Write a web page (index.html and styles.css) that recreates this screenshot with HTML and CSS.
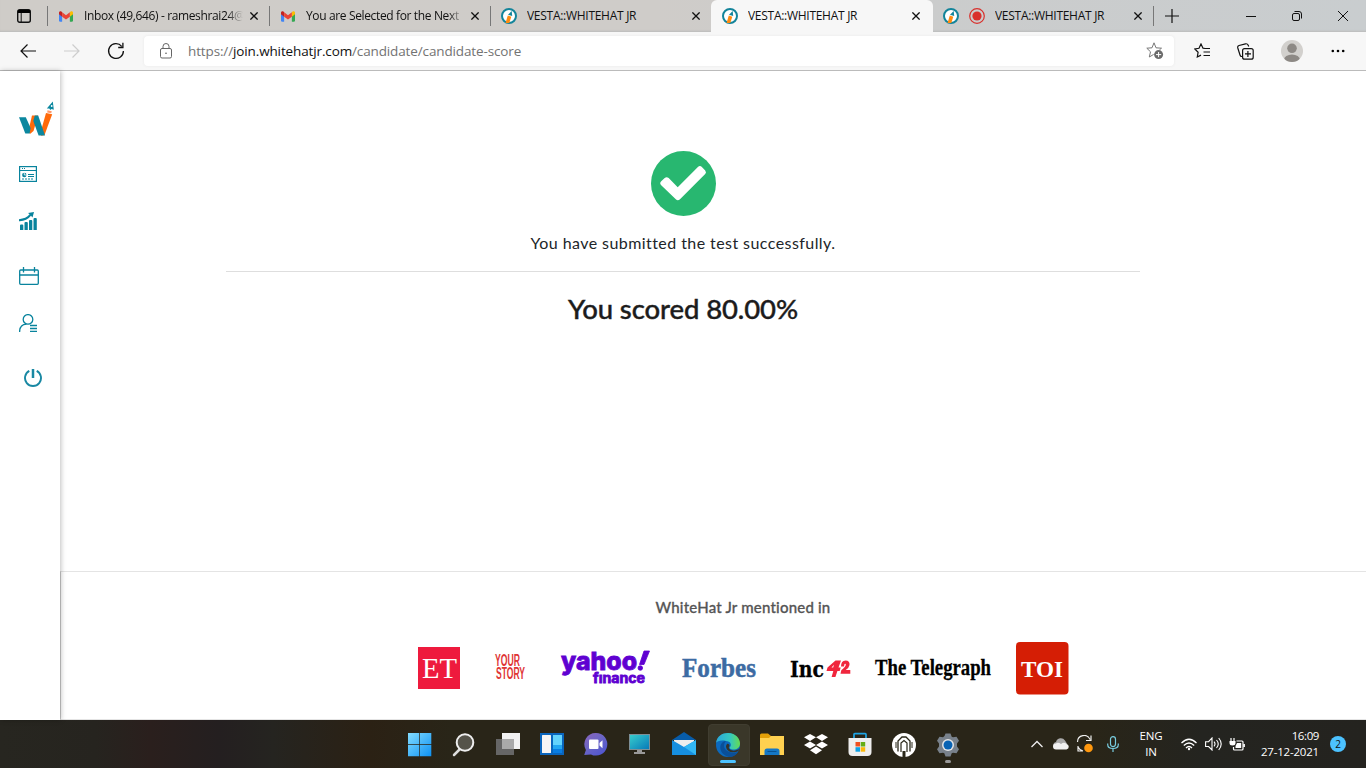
FILE: index.html
```html
<!DOCTYPE html>
<html lang="en">
<head>
<meta charset="utf-8">
<title>VESTA::WHITEHAT JR</title>
<link rel="stylesheet" href="styles.css">
</head>
<body>
<svg class="defs" width="0" height="0">
  <defs>
    <symbol id="gmail" viewBox="0 0 16 12">
      <path d="M0 2v8.500Q0 12 1.500 12H3.600V5z" fill="#4285f4"/>
      <path d="M16 2v8.500Q16 12 14.500 12h-2.100V5z" fill="#34a853"/>
      <path d="M12.400 1.200v5L16 3.500V1.700C16 0 14.200-.5 13 .5z" fill="#fbbc04"/>
      <path d="M3.600 1.200v5L0 3.500V1.700C0 0 1.800-.5 3 .5z" fill="#c5221f"/>
      <path d="M3.600 6.200v-5L8 4.500l4.400-3.300v5L8 9.500z" fill="#ea4335"/>
    </symbol>
    <symbol id="vesta" viewBox="0 0 16 16">
      <circle cx="8" cy="8" r="7" fill="#fff" stroke="#13849a" stroke-width="2"/>
      <path d="M6.800 7.500l3.500 1.200-2 6.300L4.500 15z" fill="#ff8a10"/>
      <path d="M10.700 3l.5 5-4.200-1.300z" fill="#13849a"/>
    </symbol>
    <symbol id="close" viewBox="0 0 8 8"><path d="M.4.400l7.200 7.200M7.600.400L.4 7.600" stroke="#111" stroke-width="1.300"/></symbol>
  </defs>
</svg>

<header class="tabs">
  <div class="tab-menu"><svg width="14" height="14" viewBox="0 0 14 14"><rect x=".7" y=".7" width="12.600" height="12.600" rx="2" fill="none" stroke="#111" stroke-width="1.400"/><path d="M1 1h12v3H1z"/><path d="M4.200 4v9" stroke="#111"/></svg></div>
  <div class="tab"><svg class="fav mail"><use href="#gmail"/></svg><span class="tab-title fade">Inbox (49,646) - rameshrai24@</span><svg class="x"><use href="#close"/></svg></div>
  <div class="tab"><svg class="fav mail"><use href="#gmail"/></svg><span class="tab-title fade">You are Selected for the Next</span><svg class="x"><use href="#close"/></svg></div>
  <div class="tab"><svg class="fav"><use href="#vesta"/></svg><span class="tab-title caps">VESTA::WHITEHAT JR</span><svg class="x"><use href="#close"/></svg></div>
  <div class="tab active"><svg class="fav"><use href="#vesta"/></svg><span class="tab-title caps">VESTA::WHITEHAT JR</span><svg class="x"><use href="#close"/></svg></div>
  <div class="tab last"><svg class="fav"><use href="#vesta"/></svg><svg class="rec" viewBox="0 0 16 16"><circle cx="8" cy="8" r="7.300" fill="none" stroke="#d9302c" stroke-width="1.200"/><circle cx="8" cy="8" r="4.600" fill="#d9302c"/></svg><span class="tab-title caps">VESTA::WHITEHAT JR</span><svg class="x"><use href="#close"/></svg></div>
  <svg class="plus" width="14" height="14" viewBox="0 0 14 14"><path d="M7 0v14M0 7h14" stroke="#111" stroke-width="1.200"/></svg>
  <div class="window-controls">
    <svg width="10" height="10"><path d="M0 5.500h10" stroke="#111"/></svg>
    <svg width="10" height="10" viewBox="0 0 10 10" fill="none" stroke="#111"><rect x=".5" y="2.500" width="7" height="7" rx="1.500"/><path d="M2.500.500H7Q9.500.500 9.500 3v4.500"/></svg>
    <svg width="10" height="10"><path d="M0 0l10 10M10 0L0 10" stroke="#111"/></svg>
  </div>
</header>

<div class="toolbar">
  <svg class="back" width="16" height="14" viewBox="0 0 16 14" fill="none" stroke="#111" stroke-width="1.200"><path d="M7.500.500L1 7l6.500 6.500M1 7h15"/></svg>
  <svg class="forward" width="16" height="14" viewBox="0 0 16 14" fill="none" stroke="#cdcdcd" stroke-width="1.200"><path d="M8.500.500L15 7l-6.500 6.500M15 7H0"/></svg>
  <svg class="reload" width="18" height="18" viewBox="0 0 18 18" fill="none" stroke="#111" stroke-width="1.300"><path d="M16.400 9A7.400 7.400 0 1 1 14.700 4.300M15.900.800V5.500h-4.700"/></svg>
  <div class="address">
    <svg width="12" height="16" viewBox="0 0 12 16" fill="none" stroke="#666"><rect x=".5" y="5.500" width="11" height="9.500" rx="1.500"/><path d="M3 5.500V3.500a3 3 0 0 1 6 0v2"/><circle cx="6" cy="10.200" r=".8" fill="#555" stroke="none"/></svg>
    <span class="url">https://<b>join.whitehatjr.com</b>/candidate/candidate-score</span>
    <svg class="star" width="18" height="18" viewBox="0 0 18 18"><path d="M8 .8l2 5 5.500.400-4.200 3.600 1.200 5L8 12.200 3.300 15l1.200-5.200L.8 6.200l5.200-.4z" fill="none" stroke="#777"/><circle cx="12.600" cy="12.600" r="5" fill="#fff"/><circle cx="12.600" cy="12.600" r="4.500" fill="#6b6b6b"/><path d="M12.600 10v5.200M10 12.600h5.200" stroke="#fff"/></svg>
  </div>
  <svg class="favorites" width="17" height="17" viewBox="0 0 17 17" fill="none" stroke="#111" stroke-width="1.200"><path d="M11 5.500L9 5.200 7 1 5 5.300.8 6l3.300 3.300L3.300 14 7 12.100M10.500 5.500H16M9.500 9H16M9.500 12.500H16"/></svg>
  <svg class="collections" width="17" height="17" viewBox="0 0 17 17" fill="none" stroke="#111" stroke-width="1.200"><rect x="5.600" y="5.600" width="10.600" height="10.600" rx="2"/><path d="M10.900 8v6M8 10.900h6M5 13.500H4.500Q3.500 13.500 3 12L.8 5Q.3 3 2 2.500L8.500.800Q10.500.500 11.200 2.200L11.700 3.500"/></svg>
  <svg class="avatar" width="22" height="22" viewBox="0 0 22 22"><defs><clipPath id="face"><circle cx="11" cy="11" r="11"/></clipPath></defs><g clip-path="url(#face)"><path d="M0 0h22v22H0z" fill="#d2d0cd"/><circle cx="11" cy="8.300" r="4.800" fill="#8d8985"/><ellipse cx="11" cy="20" rx="8" ry="5.500" fill="#8d8985"/></g></svg>
  <svg class="more" width="14" height="4"><circle cx="1.800" cy="2" r="1.300"/><circle cx="7" cy="2" r="1.300"/><circle cx="12.200" cy="2" r="1.300"/></svg>
</div>

<div class="page">
  <nav class="sidebar">
    <svg class="brand" width="36" height="35" viewBox="0 0 36 35"><path d="M9 31.500L13 14.500h6L14.500 30l-3.200 2.800z" fill="#ff6a0b"/><path d="M0 16.300h6.800L11.600 27l-1 5.600H6.300z" fill="#0b879f"/><path d="M21 33.500L27 12l6.200 1.200L25.500 34l-3 .8z" fill="#ff6a0b"/><path d="M15.800 14.500h3.400L26 34.600h-6.400L14.300 20z" fill="#0b879f"/><path d="M27.800 7.500L33.800.400l1 8.400-2.300-.8-1.200 1-1-1.400z" fill="#0b879f"/><path d="M28.500 9.200l4.300 1-.6 2-4-.7z" fill="#ff986a"/><circle cx="32.700" cy="5" r=".9" fill="#fff"/></svg>
    <svg class="report" width="18" height="16" viewBox="0 0 18 16" fill="none" stroke="#08839d"><rect x=".6" y=".6" width="16.800" height="14.800" stroke-width="1.200"/><path d="M0 4.500h18M9 8.500h6M9 10.500h6"/><path d="M3 2.500h3" stroke-dasharray="1 1"/><path d="M3 13h12" stroke-dasharray="2 1"/><circle cx="5.300" cy="9" r="2.200" fill="#08839d" stroke="none"/><path d="M5.300 9V6.500M5.300 9h2.500" stroke="#fff" stroke-width=".8"/></svg>
    <svg class="chart" width="19" height="18" viewBox="0 0 19 18" fill="#08839d"><path d="M1 13.500Q1 12.500 2 12.500h1.300q1 0 1 1V18H1zM5.500 11q0-1 1-1h1.300q1 0 1 1v7H5.500zM10 9q0-1 1-1h1.300q1 0 1 1v9H10zM14.500 7q0-1 1-1h1.300q1 0 1 1v11h-3.300z"/><path d="M0 7.200Q7 6.600 10.600 2.300L9 1.100 15 0l-1.500 5.500-1.500-1.700Q7.500 9.500 0 9.200z"/></svg>
    <svg class="calendar" width="20" height="18" viewBox="0 0 20 18" fill="none" stroke="#08839d" stroke-width="1.300"><rect x=".7" y="3" width="18.600" height="14.300" rx="1"/><path d="M.7 8h18.600M4.500 0v5.500M15.500 0v5.500"/></svg>
    <svg class="user" width="19" height="18" viewBox="0 0 19 18" fill="none" stroke="#08839d" stroke-width="1.300"><circle cx="9" cy="5.400" r="4.800"/><path d="M.6 18Q.6 10.500 7.500 10.200M11 11.500h7M11 14.500h7M11 17.300h7"/></svg>
    <svg class="power" width="18" height="18" viewBox="0 0 18 18" fill="none" stroke="#1988a3" stroke-width="1.900"><path d="M5.300 1.900a8 8 0 1 0 7.400 0"/><path d="M9 0v9" stroke-width="2.500"/></svg>
  </nav>
  <div class="content">
    <main class="result">
      <svg class="check" width="65" height="65" viewBox="0 0 65 65"><circle cx="32.500" cy="32.500" r="32.500" fill="#28b770"/><path d="M10.200 34.200q-2-2 0-4l3.500-3.300q2-1.600 4 .2l9 9.200 20.200-20.200q2-2 4 0l3.300 3.500q1.600 2 0 3.500L29 48.300q-2.200 2-4.200 0z" fill="#fff"/></svg>
      <p class="message">You have submitted the test successfully.</p>
      <hr class="rule">
      <h1 class="score">You scored 80.00%</h1>
    </main>
    <footer class="press">
      <h2 class="press-title">WhiteHat Jr mentioned in</h2>
      <div class="logos">
        <svg class="et" width="42" height="42"><path d="M0 0h42v42H0z" fill="#ee1a3d"/><text x="4" y="30.500" textLength="35" lengthAdjust="spacingAndGlyphs" font-size="30" fill="#fff" class="serif">ET</text></svg>
        <svg class="ys" width="30" height="28" fill="#e03535"><text x="0" y="13" textLength="25" lengthAdjust="spacingAndGlyphs" font-size="16" class="sans heavy">YOUR</text><text x="1" y="26" textLength="29" lengthAdjust="spacingAndGlyphs" font-size="16" class="sans heavy">STORY</text></svg>
        <svg class="yahoo" width="90" height="36" fill="#5f01d1"><g stroke="#5f01d1" stroke-width=".8"><text x="0" y="20" textLength="76" lengthAdjust="spacingAndGlyphs" font-size="25" class="inter">yahoo</text><path d="M83 1h5.500L83 14.500h-4.500z"/><circle cx="79.300" cy="18" r="2.300"/><text x="32" y="33.200" textLength="52" lengthAdjust="spacingAndGlyphs" font-size="13" class="inter finance">fınance</text></g></svg>
        <svg class="forbes" width="75" height="24" fill="#3c6ba3" stroke="#3c6ba3" stroke-width=".5"><text x="0" y="19.500" textLength="74" lengthAdjust="spacingAndGlyphs" font-size="27" class="serif bold">Forbes</text></svg>
        <svg class="inc" width="61" height="24"><text x="0" y="19.500" textLength="34" lengthAdjust="spacingAndGlyphs" font-size="21.500" stroke="#000" stroke-width=".3" class="slab bold">Inc</text><path d="M45.500 3.500h5.500l-2.500 7h2.200l-1 3.500h-2.300l-2 6h-3.800l1.700-6H36.500l1-3.500zM44 7.800l-2.500 2.700h1.700z" fill="#f0263d" fill-rule="evenodd"/><path d="M51 9.500q0-6 4.500-6 4.500.2 4 4.500-.3 2.500-3.800 5h4.600v3.800h-9.800l.8-3.500q4.500-3.800 4.500-5.500t-1.300-.7l-.5 2.400z" fill="#f0263d"/></svg>
        <svg class="telegraph" width="117" height="28"><text x="0" y="20" textLength="116" lengthAdjust="spacingAndGlyphs" font-size="24" stroke="#000" stroke-width=".3" class="serif bold">The Telegraph</text></svg>
        <svg class="toi" width="53" height="53"><rect width="52.500" height="52.500" rx="4" fill="#d51e05"/><text x="5" y="34.500" textLength="42" lengthAdjust="spacingAndGlyphs" font-size="24" fill="#fff" class="serif bold">TOI</text></svg>
      </div>
    </footer>
  </div>
</div>

<div class="taskbar">
  <div class="apps">
    <div class="app"><svg viewBox="0 0 24 24"><defs><linearGradient id="win" x2="1" y2="1"><stop stop-color="#83dcff"/><stop offset="1" stop-color="#0d91f3"/></linearGradient></defs><path d="M0 0h11.300v11.300H0zM12 0h11.300v11.300H12zM0 12h11.300v11.300H0zM12 12h11.300v11.300H12z" fill="url(#win)"/></svg></div>
    <div class="app"><svg viewBox="0 0 24 24"><path d="M8.500 15.500L2 22" stroke="#ddd" stroke-width="2.500" stroke-linecap="round"/><circle cx="13" cy="9.500" r="8.300" fill="#55534a" stroke="#eee" stroke-width="2"/></svg></div>
    <div class="app"><svg viewBox="0 0 24 24"><path d="M6 0h18v16H6z" fill="#f2f2f2"/><path d="M0 6h18v16H0z" fill="#666"/><path d="M6 6h12v10H6z" fill="#aaa"/></svg></div>
    <div class="app"><svg viewBox="0 0 24 24"><path d="M0 0h24v22H0z" fill="#0965bd"/><rect x="2" y="2" width="9" height="18" rx=".5" fill="#f5f5f5"/><path d="M13 2h9v10h-9z" fill="#63d3fc"/><path d="M13 12h9v4h-9z" fill="#22a7f2"/><path d="M13 16h9v4h-9z" fill="#087de2"/></svg></div>
    <div class="app"><svg viewBox="0 0 24 24"><defs><linearGradient id="chat" x2=".8" y2="1"><stop stop-color="#8b65bd"/><stop offset=".5" stop-color="#6a65c5"/><stop offset="1" stop-color="#4e55d0"/></linearGradient></defs><path d="M12 0a11.300 11.300 0 1 1-5 21.400L.2 22l1.700-5A11.300 11.300 0 0 1 12 0z" fill="url(#chat)"/><rect x="5" y="6.500" width="9.500" height="9.500" rx="1" fill="#fff"/><path d="M15.500 10l3-2.800v8l-3-2.700z" fill="#fff"/></svg></div>
    <div class="app"><svg viewBox="0 0 24 24"><defs><linearGradient id="screen" x2="1" y2="1"><stop stop-color="#37cccc"/><stop offset="1" stop-color="#077ab9"/></linearGradient></defs><path d="M1 1h21v16H1z" fill="#7d8f96"/><path d="M2 2h19v14H2z" fill="url(#screen)"/><path d="M9 17h5v2h3v2H6v-2h3z" fill="#999"/></svg></div>
    <div class="app"><svg viewBox="0 0 24 24"><path d="M0 7l12-8 12 8z" fill="#075ca9"/><path d="M2 7h20v12H2z" fill="#eee"/><path d="M0 7l12 7L24 7v15H0z" fill="#168fe0"/><path d="M24 7v15L12 14z" fill="#32b7f4"/></svg></div>
    <div class="app current"><svg viewBox="0 0 24 24"><defs><linearGradient id="edge" x2="1"><stop stop-color="#2aa7dc"/><stop offset=".6" stop-color="#35c8bd"/><stop offset="1" stop-color="#67db50"/></linearGradient></defs><circle cx="12" cy="12" r="12" fill="#0c69bd"/><path d="M0 10C1 3 6 0 12 0c8 0 12 6 12 10.500 0 4-3 6-6.500 6-3 0-4.500-1.500-3.500-2.500 2-2 .5-6-4-6C5 7 1 8 0 10z" fill="url(#edge)"/><path d="M10 8C2 9 2 21 13 24q6 0 9.500-5.500-4 2.500-9 .5C7 17 7 11 10 8z" fill="#0a4f99"/><path d="M11 11c1-.5 2.500.5 2.500 2-1 1-1 2 .5 3.500 2 1.600 5.500 1.500 8 0 1.500-.5 1.500 0 .5 1.300-5 3.200-12 1.200-12.500-4.300q0-1.500 1-2.500z" fill="#34332a"/></svg><i></i></div>
    <div class="app"><svg viewBox="0 0 24 24"><path d="M0 2q0-1.500 1.500-1.500H8l3 2.500H22.500Q24 3 24 4.500V22H0z" fill="#e3a008"/><path d="M0 5h9l2-2h13v19H0z" fill="#ffd150"/><path d="M4.500 22v-4q0-2.500 2.500-2.500h10q2.500 0 2.500 2.500v4z" fill="#1477c5"/><path d="M7.500 18.500h9" stroke="#075291"/></svg></div>
    <div class="app"><svg viewBox="0 0 24 24" fill="#fff"><path d="M0 4.300L6 1l6 3.300-6 3.600zM12 4.300L18 1l6 3.300-6 3.600zM0 12l6-3.500L12 12l-6 3.500zM12 12l6-3.500L24 12l-6 3.500zM6 17.200l6-3.600 6 3.600-6 4z"/></svg></div>
    <div class="app"><svg viewBox="0 0 24 24"><path d="M6 6V1.500q0-.8.8-.8h10.400q.8 0 .8.800V6" fill="none" stroke="#1fa5e5" stroke-width="1.700"/><path d="M.5 5h23v14q0 4-4 4h-15q-4 0-4-4z" fill="#eee"/><path d="M7.500 9H12v4.500H7.500z" fill="#ef5020"/><path d="M12.700 9h4.500v4.500h-4.500z" fill="#65ad16"/><path d="M7.500 14.200H12v4.500H7.500z" fill="#0ba0e5"/><path d="M12.700 14.200h4.500v4.500h-4.500z" fill="#fbb90c"/></svg></div>
    <div class="app"><svg viewBox="0 0 24 24"><circle cx="12" cy="12" r="12" fill="#fff"/><path d="M6 18.500V8l4-4h4l4 4v10.500" fill="none" stroke="#292719" stroke-width="1.300"/><path d="M4 15V9M20 15V9" stroke="#292719"/><path d="M9 19v-9l3-2.500 3 2.500v9" fill="none" stroke="#292719" stroke-width="1.200"/><path d="M10.500 18h3v6h-3z" fill="#292719"/></svg></div>
    <div class="app"><svg viewBox="0 0 24 24"><path d="M8.500 3L9.500.500h5l1.200 3.200L17 4.300l3.500-.5 2.500 4-2 2.700v3l2 2.700-2.500 4-3.500-.5-1.300.6-1.200 3.200h-5l-1.200-3.200-1.300-.6-3.500.5-2.500-4 2-2.700v-3L1 7.800l2.500-4 3.500.5z" fill="#78818b"/><circle cx="12" cy="12" r="6" fill="#e4e5e7"/><circle cx="12" cy="12" r="4.500" fill="#0863b4"/></svg><em></em></div>
  </div>
  <div class="tray">
    <svg class="chev" width="12" height="8" fill="none" stroke="#eee" stroke-width="1.300"><path d="M.5 7L6 1.500 11.500 7"/></svg>
    <svg class="cloud" width="17" height="12" viewBox="0 0 17 12"><path d="M.5 8a3 3 0 0 1 2.500-4 5 5 0 0 1 9-1.500l2.500 4z" fill="#aaa"/><path d="M3 11.500a3 3 0 0 1 0-6Q5 4 8 6q3-2.500 5.500 0a2.800 2.800 0 0 1 0 5.500z" fill="#f1f1f1"/></svg>
    <svg class="sync" width="18" height="18" viewBox="0 0 18 18"><path d="M1.500 7A6.500 6.500 0 0 1 14 4.500M15 .5v5h-5M7 16H2v-5M2 12q1.500 3 5 4" fill="none" stroke="#eee" stroke-width="1.200"/><circle cx="12.500" cy="13" r="4.300" fill="#ff980e"/></svg>
    <svg class="mic" width="12" height="16" viewBox="0 0 12 16" fill="none" stroke="#78ccdf" stroke-width="1.200"><rect x="3.500" y=".6" width="5" height="10" rx="2.500"/><path d="M.7 7.500v1q0 4 5.300 4t5.300-4v-1M6 12.500V16"/></svg>
    <div class="lang">ENG<br>IN</div>
    <svg class="wifi" width="16" height="13" viewBox="0 0 16 13" fill="none" stroke="#fff" stroke-width="1.300"><path d="M.5 5Q8-2.500 15.500 5M2.800 7.500q5.200-5 10.400 0M5 10q3-3 6 0"/><circle cx="8" cy="11" r="1.200" fill="#fff" stroke="none"/></svg>
    <svg class="sound" width="17" height="14" viewBox="0 0 17 14" fill="none" stroke="#fff" stroke-width="1.100"><path d="M.6 4.700h3L7 1v12L3.600 9.500h-3zM9 4.700q2 2.300 0 4.600M11.500 3q3.500 4 0 8M13.700 1q5 6 0 12"/></svg>
    <svg class="battery" width="17" height="13" viewBox="0 0 17 13" fill="none" stroke="#fff" stroke-width="1.200"><path d="M7.500 3H13q1 0 1 1v7q0 1-1 1H5.500q-1 0-1-1V9M15.300 6v3M2 0v3M5 0v3"/><path d="M.5 3h6v2q0 2.500-3 2.500T.5 5z" fill="#fff" stroke="none"/><path d="M8 5h4.200v5H6.500V8Z" fill="#fff" stroke="none"/></svg>
    <div class="clock"><span class="time">16:09</span><br>27-12-2021</div>
    <div class="badge">2</div>
  </div>
</div>
</body>
</html>
```
FILE: styles.css
```css
* { box-sizing: border-box; }
body { margin: 0; width: 1366px; height: 768px; overflow: hidden; background: #fff; font-family: "Open Sans", "Noto Sans", sans-serif; color: #111; }
svg { display: block; flex: none; }
.defs { position: absolute; }

.tabs { display: flex; height: 32px; background: linear-gradient(90deg, #cfccc8, #cfccc9 48%, #cbcccc 68%, #c9cdcf); box-shadow: inset 0 -2px 2px -1px #bbb; }
.tab-menu { width: 47px; padding: 9px 0 0 17px; flex: none; }
.tab { width: 221px; flex: none; display: flex; align-items: center; padding: 0 11px 0 10px; position: relative; }
.tab:nth-child(2) { width: 222px; }
.tab::before { content: ""; width: 1px; height: 20px; background: #777; position: absolute; left: 0; top: 6px; }
.tab.active { width: 222px; padding-right: 13px; background: #f7f7f7; border-radius: 6px 6px 0 0; }
.tab.active::before { display: none; }
.tab.last { padding-right: 12px; }
.tab.last::before { left: auto; right: 0; }
.fav { width: 16px; height: 16px; margin-right: 10px; }
.fav.mail { width: 14px; height: 11px; margin: 0 11px 0 2px; }
.tab:nth-child(4), .tab:nth-child(5) { padding-left: 11px; }
.rec { width: 16px; height: 16px; margin-right: 10px; }
.tab-title { font-size: 12px; line-height: 16px; white-space: nowrap; overflow: hidden; flex: 1; }
.caps { letter-spacing: -.28px; }
.fade { letter-spacing: -.36px; -webkit-mask-image: linear-gradient(90deg, #000 90%, transparent 100%); mask-image: linear-gradient(90deg, #000 90%, transparent 100%); }
.x { width: 8px; height: 8px; margin-left: 7px; }
.plus { margin: 9px 0 0 11px; }
.window-controls { display: flex; align-items: center; gap: 36px; margin-left: auto; padding-right: 18px; }

.toolbar { height: 39px; background: #f7f7f7; border-bottom: 1px solid #bbb; display: flex; align-items: center; }
.back { margin-left: 20px; }
.forward { margin-left: 28px; }
.reload { margin-left: 27px; }
.address { width: 1030px; height: 30px; margin-left: 19px; background: #fff; border-radius: 4px; display: flex; align-items: center; padding: 0 10px 0 16px; box-shadow: 0 0 3px #e8e8e8; }
.url { margin-left: 16px; font-size: 13.500px; letter-spacing: -.13px; color: #737373; }
.url b { font-weight: 400; color: #111; }
.star { margin-left: auto; }
.favorites { margin-left: 20px; }
.collections { margin-left: 26px; }
.avatar { margin-left: 27px; }
.more { margin-left: 28px; }

.page { display: flex; height: 649px; }
.sidebar { width: 60px; flex: none; padding: 30px 0 0 19px; box-shadow: 1px 0 5px rgba(0,0,0,.25); background: #fff; z-index: 1; }
.report, .chart { margin-top: 30px; }
.calendar { margin-top: 37px; }
.user { margin-top: 29px; }
.power { margin: 37px 0 0 5px; }
.content { flex: 1; display: flex; flex-direction: column; }
.result { height: 500px; padding: 80px 60px 0 0; display: flex; flex-direction: column; align-items: center; font-family: Lato, sans-serif; }
.message { margin: 15px 0 0; font-size: 16px; line-height: 24px; letter-spacing: .43px; color: #212529; white-space: nowrap; }
.rule { width: 914px; height: 1px; margin: 16px 0 0; border: 0; background: #dedede; }
.score { margin: 19px 0 0; font-size: 27.500px; line-height: 36px; letter-spacing: -.1px; font-weight: 500; color: #1c1c1c; white-space: nowrap; -webkit-text-stroke: .4px #1c1c1c; }
.press { height: 149px; border: 1px solid #e4e4e4; border-left-color: #ccc; border-right: 0; padding-left: 59px; }
.press-title { margin: 25px 0 0; text-align: center; font: 500 15px/20px Lato, sans-serif; letter-spacing: .2px; font-variant-ligatures: none; color: #555; -webkit-text-stroke: .3px #555; }
.logos { display: flex; align-items: center; justify-content: flex-start; padding-left: 298px; height: 53px; margin-top: 25px; }
.logos svg { overflow: visible; }
.et, .yahoo { margin-top: -1px; }
.ys { margin-left: 35px; margin-top: -3px; }
.yahoo { margin-left: 36px; }
.forbes { margin-left: 31px; }
.inc { margin-left: 33px; }
.telegraph { margin-left: 24px; }
.toi { margin-left: 23.500px; }
.serif { font-family: "Liberation Serif", serif; }
.slab { font-family: "DejaVu Serif", serif; }
.sans { font-family: "Liberation Sans", sans-serif; }
.inter { font-family: Inter, sans-serif; font-weight: 800; }
.finance { font-weight: 700; }
.bold, .heavy { font-weight: 700; }

.taskbar { height: 48px; position: relative; display: flex; background: linear-gradient(90deg, #272620, #26241f 7%, #2a1f1d 11%, #241f20 16%, #252420 20%, #2b2114 27%, #292518 33%, #292518 80%, #242420 88%, #24231f); }
.apps { display: flex; margin-left: 398px; align-items: center; }
.app { width: 44px; height: 48px; padding: 13px 10px 0; position: relative; }
.app svg { width: 24px; height: 24px; overflow: visible; }
.current::before { content: ""; position: absolute; left: 2px; top: 4px; width: 40px; height: 40px; border-radius: 4px; background: #3a3729; border: 1px solid #403d30; }
.current svg { position: relative; }
.current i { position: absolute; left: 14px; top: 40px; width: 16px; height: 3px; border-radius: 2px; background: #4cc2ff; }
.app em { position: absolute; left: 19px; top: 40px; width: 6px; height: 3px; border-radius: 2px; background: #999; }
.tray { display: flex; align-items: center; margin-left: 61px; color: #fff; font-size: 11.500px; line-height: 16px; }
.cloud { margin-left: 10px; }
.sync { margin-left: 6px; }
.mic { margin-left: 13px; }
.lang { width: 30px; margin-left: 17px; text-align: center; letter-spacing: -.2px; }
.wifi { margin-left: 15px; }
.sound { margin-left: 8px; }
.battery { margin-left: 7px; }
.clock { width: 70px; margin-left: 3px; text-align: right; white-space: nowrap; letter-spacing: -.2px; }
.time { letter-spacing: -.4px; }
.badge { width: 16px; height: 16px; margin-left: 11px; border-radius: 50%; background: #4cc2ff; color: #111; font-size: 10px; text-align: center; }
```
